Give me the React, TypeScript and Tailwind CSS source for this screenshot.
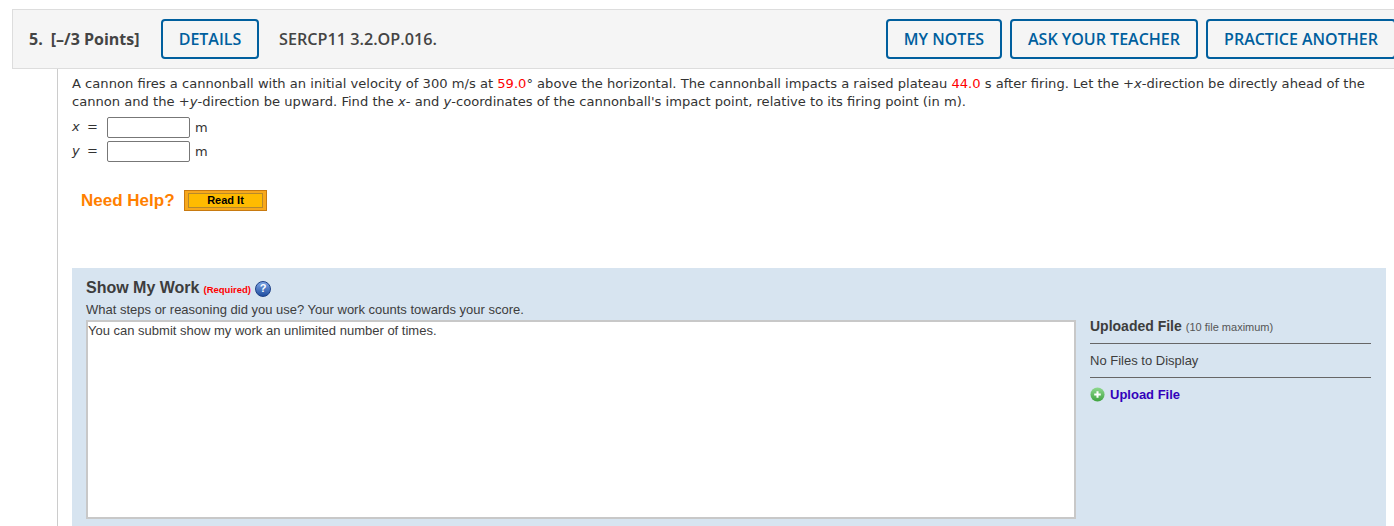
const verdana = "font-['DejaVu_Sans',sans-serif]"

function HeaderButton({ label, width }: { label: string; width: string }) {
  return (
    <button className={`flex h-10 ${width} items-center justify-center rounded-[4px] border-2 border-[#005f9e] text-[16px] font-semibold text-[#005f9e]`}>
      {label}
    </button>
  )
}

function AnswerRow({ name }: { name: string }) {
  return (
    <div className="flex h-6 items-center text-[13px] text-[#333]">
      <i className="w-[15px]">{name}</i>
      <span className="w-[20px]">=</span>
      <input className="h-[21px] w-[83px] rounded-[2px] border border-[#777] bg-white" />
      <span className="ml-[5px] pt-px">m</span>
    </div>
  )
}

export default function App() {
  return (
    <div className="h-[526px] w-[1394px] overflow-hidden bg-white pl-3 pt-[9px]">
      {/* question header */}
      <div className="flex h-[60px] w-[1385px] items-center border border-[#ddd] bg-[#f5f5f5] pl-4 font-['Open_Sans',sans-serif] text-[#444]">
        <span className="w-[132px] text-[16px] font-bold">
          5.<span className="ml-2">[–/3 Points]</span>
        </span>
        <HeaderButton label="DETAILS" width="w-[98px]" />
        <span className="ml-[20px] text-[16.2px] font-semibold">SERCP11 3.2.OP.016.</span>
        <div className="ml-auto flex gap-2">
          <HeaderButton label="MY NOTES" width="w-[116px]" />
          <HeaderButton label="ASK YOUR TEACHER" width="w-[188px]" />
          <HeaderButton label="PRACTICE ANOTHER" width="w-[190px]" />
        </div>
      </div>

      <div className="ml-[45px] h-[457px] border-l border-[#ccc] pl-[14px]">
        <div className={verdana}>
          <p className="pt-[6px] text-[13.1px] leading-[18px] text-[#333]">
            A cannon fires a cannonball with an initial velocity of 300 m/s at <span className="text-[#f00]">59.0</span>° above the horizontal. The cannonball impacts a raised plateau <span className="text-[#f00]">44.0</span> s after firing. Let the +<i>x</i>-direction be directly ahead of the
            <br />
            cannon and the +<i>y</i>-direction be upward. Find the <i>x</i>- and <i>y</i>-coordinates of the cannonball's impact point, relative to its firing point (in m).
          </p>
          <div className="mt-[4px]">
            <AnswerRow name="x" />
            <AnswerRow name="y" />
          </div>
        </div>

        <div className="mt-[25px] flex items-center pl-[9px] font-['Liberation_Sans',sans-serif]">
          <span className="w-[103px] text-[17px] font-bold text-[#ff8000]">Need Help?</span>
          <button className="h-[21px] w-[83px] border border-[#c87a10] bg-[#f7a81c] px-[3px] py-[2px]">
            <span className="flex h-full items-center justify-center border border-[#b8892a] bg-[#ffbb00] text-[11px] font-bold leading-none text-black">
              Read It
            </span>
          </button>
        </div>

        {/* show my work */}
        <div className="mt-[54px] flex h-[264px] w-[1314px] bg-[#d7e4f0] pl-[14px] font-['Liberation_Sans',sans-serif] text-[#3d3d3d]">
          <div className="w-[990px]">
            <div className="flex h-[30px] items-end">
              <span className="text-[16px] font-bold leading-[20px]">Show My Work</span>
              <span className="ml-[4px] text-[9.5px] font-bold leading-[16px] text-[#f00]">(Required)</span>
              <span className="mb-px ml-[4px] flex h-4 w-4 items-center justify-center rounded-full border border-[#1c3f86] bg-linear-to-b from-[#7fa6e6] to-[#1f4ea0] text-[11px] font-bold leading-none text-white">
                ?
              </span>
            </div>
            <p className="mt-[4px] text-[13px] leading-[16px]">What steps or reasoning did you use? Your work counts towards your score.</p>
            <textarea
              className="mt-[2px] block h-[199px] w-[990px] resize-none border-2 border-[#c8c8c8] bg-white pt-px text-[13px] leading-[16px] outline-none"
              defaultValue="You can submit show my work an unlimited number of times."
            />
          </div>

          <div className="ml-[14px] w-[281px] pt-[50px]">
            <div className="flex h-[26px] items-start border-b border-[#666]">
              <span className="text-[14px] font-bold leading-[17px]">Uploaded File</span>
              <span className="ml-[4px] text-[11px] leading-[18px] text-[#555]">(10 file maximum)</span>
            </div>
            <div className="flex h-[34px] items-center border-b border-[#666] pt-[2px] text-[13px]">No Files to Display</div>
            <div className="mt-[7px] flex items-center">
              <svg viewBox="0 0 16 16" className="h-[15px] w-[15px]">
                <defs>
                  <linearGradient id="upload-green" x1="0" y1="0" x2="0" y2="1">
                    <stop offset="0" stopColor="#8fd98f" />
                    <stop offset="1" stopColor="#3fa33f" />
                  </linearGradient>
                </defs>
                <circle cx="8" cy="8" r="7.5" fill="url(#upload-green)" />
                <path d="M8 4.5v7M4.5 8h7" stroke="#fff" strokeWidth="2.2" />
              </svg>
              <span className="ml-[5px] text-[13px] font-bold text-[#3300bb]">Upload File</span>
            </div>
          </div>
        </div>
      </div>
    </div>
  )
}
